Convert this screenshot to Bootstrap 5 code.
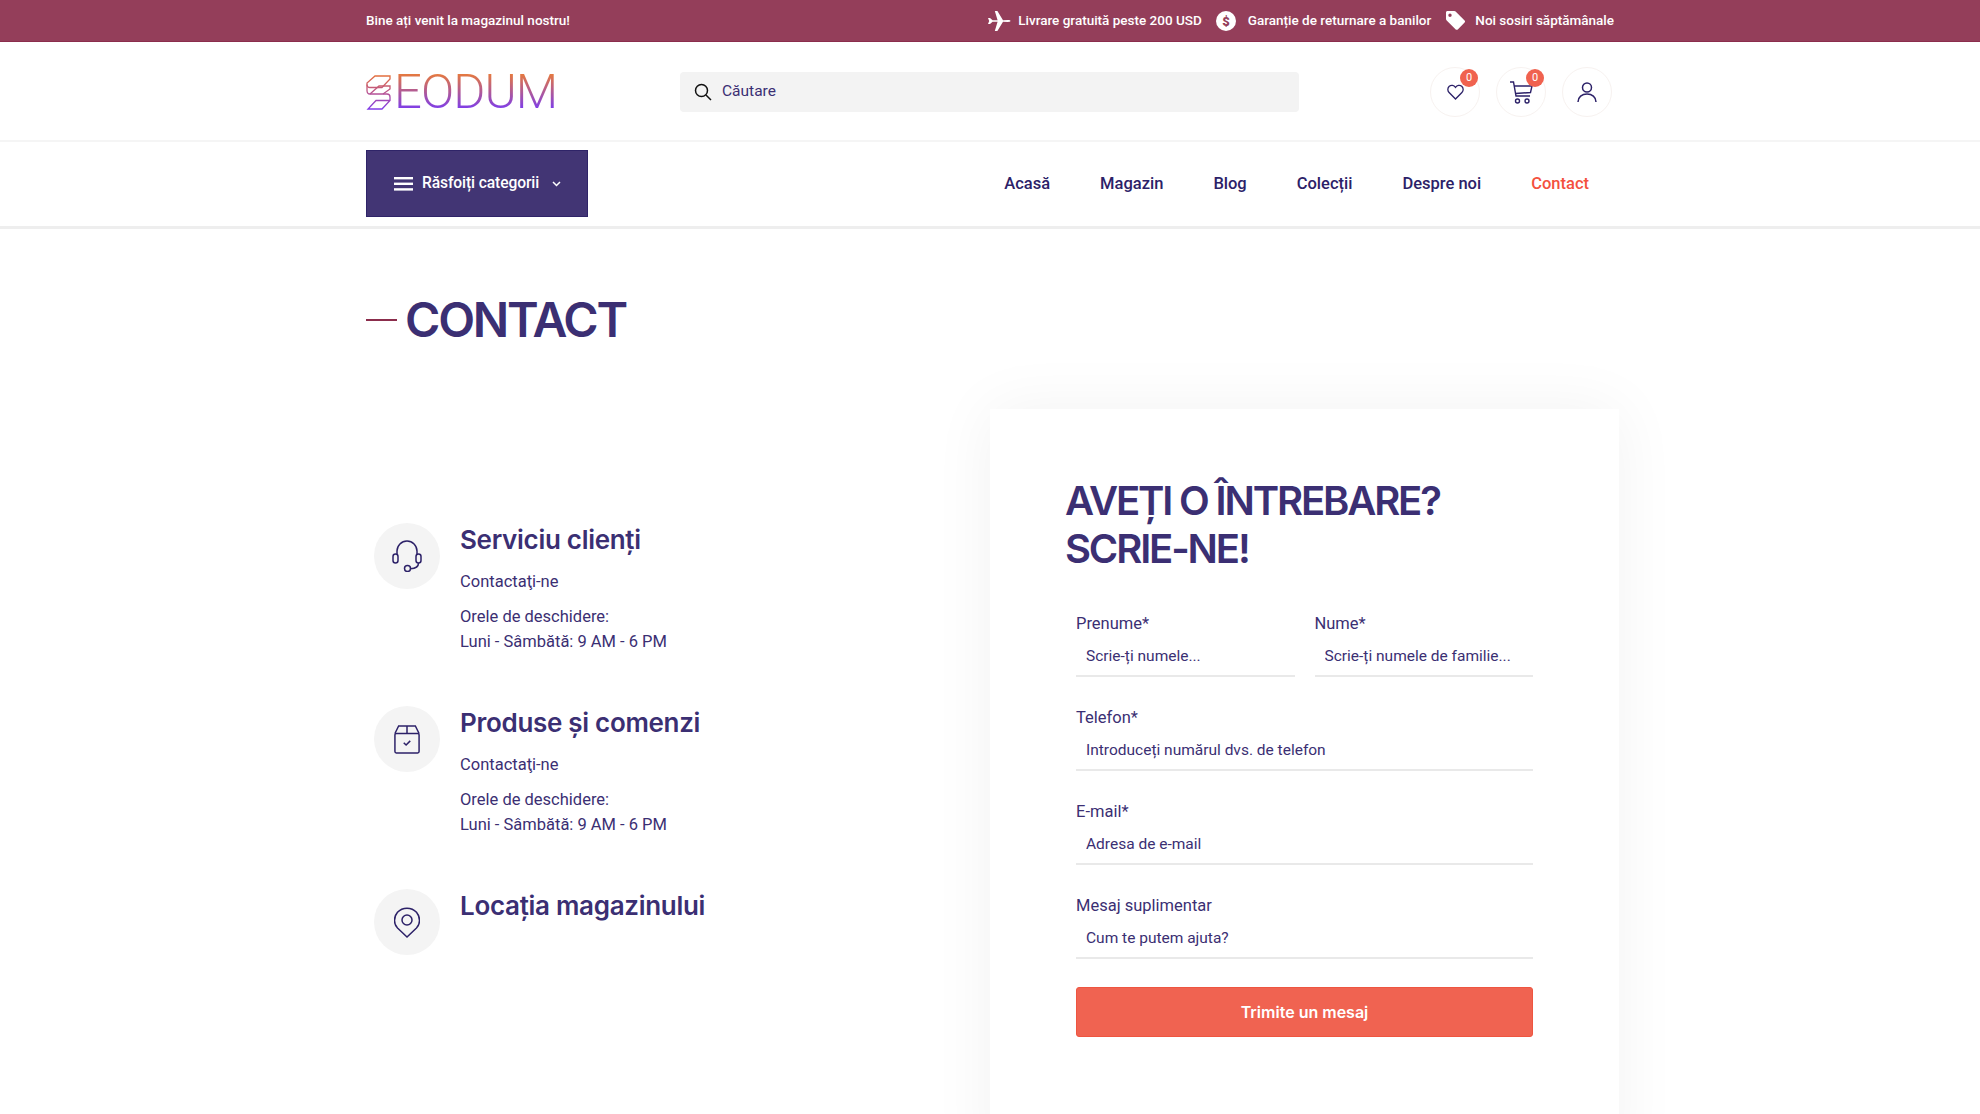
<!DOCTYPE html>
<html lang="ro">
<head>
  <meta charset="UTF-8">
  <meta name="viewport" content="width=device-width, initial-scale=1.0">
  <title>Contact</title>
  <link rel="stylesheet" href="https://cdn.jsdelivr.net/npm/bootstrap@5.3.3/dist/css/bootstrap.min.css">
  <style>
    html, body { height: 1114px; overflow: hidden; }
    body { font-family: Roboto, "Liberation Sans", sans-serif; color: #3b2f73; background: #fff; }
    .wrap { width: 1248px; margin: 0 auto; }
    .topbar { height: 42px; background: #943e5a; border-bottom: 1px solid #8b2d4c; color: #fff; font-size: 13.5px; font-weight: 500; }
    .topbar svg { display: block; flex: none; }
    .gap-plane { margin-right: 7px; }
    .gap-ship { margin-right: 14px; }
    .gap-dollar { margin-right: 12px; }
    .gap-money { margin-right: 14px; }
    .gap-tag { margin-right: 9px; }
    .headbar { height: 100px; border-bottom: 2px solid #f5f5f5; padding-top: 2px; }
    .logo-box { width: 314px; gap: 3px; }
    .logo-word { font-family: Roboto, sans-serif; font-size: 49px; line-height: 36px; font-weight: 300; letter-spacing: -.9px; background: linear-gradient(#e5793f, #7a3bf0); -webkit-background-clip: text; background-clip: text; color: transparent; }
    .search-box { width: 619px; height: 40px; background: #f3f3f3; border-radius: 4px; padding-left: 14px; font-size: 15.5px; color: #3b2f73; gap: 10px; }
    .btn-group-round { gap: 16px; margin-right: 2px; }
    .round-btn { width: 50px; height: 50px; border: 1px solid #f7f2f0; border-radius: 50%; position: relative; }
    .count-dot { position: absolute; top: 1px; right: 1px; width: 18px; height: 18px; border-radius: 50%; background: #f0624f; color: #fff; font-size: 11px; line-height: 18px; text-align: center; }
    .menubar { height: 87px; border-bottom: 3px solid #eeeeee; }
    .cat-btn { width: 222px; height: 67px; background: #423574; border: 1px solid #2f2468; border-radius: 0; color: #fff; font-size: 15.6px; font-weight: 500; padding: 0 0 0 27px; gap: 9px; letter-spacing: -.1px; }
    .cat-btn:hover { background: #423574; color: #fff; }
    .main-menu { height: 69px; }
    .main-menu .nav-link { color: #2c2168; font-size: 16.5px; font-weight: 500; padding: 0 25px; }
    .main-menu .nav-link.active { color: #f4513e; }
    .page-title { font-family: Inter, sans-serif; font-weight: 600; font-size: 48px; line-height: 58px; letter-spacing: -2.2px; color: #3b2f73; margin: 0; }
    .title-dash { width: 31px; height: 2px; background: #8b2d4c; margin-right: 8px; }
    .title-row { padding-top: 62px; }
    .content-row { margin-top: 60px; }
    .info-col { width: 624px; padding: 114px 0 0 8px; flex: none; }
    .info-item { height: 183px; gap: 20px; }
    .ico-circle { width: 66px; height: 66px; border-radius: 50%; background: #f4f4f4; flex: none; }
    .info-item h3 { font-family: Inter, sans-serif; font-weight: 600; font-size: 26px; line-height: 32px; letter-spacing: -.3px; color: #3b2f73; margin: 1px 0 13px; }
    .info-item p { font-size: 16.5px; line-height: 25px; margin: 0 0 10px; color: #3b2f73; }
    .form-card { width: 629px; height: 760px; flex: none; background: #fff; box-shadow: 0 0 60px rgba(0,0,0,.055); padding: 68px 86px 0 86px; }
    .form-card h2 { font-family: Inter, sans-serif; font-weight: 600; font-size: 40px; line-height: 48px; letter-spacing: -2.15px; color: #3b2f73; margin: 0 0 39px -11px; }
    .name-row { gap: 20px; }
    .fld { margin-bottom: 29px; }
    .fld .form-label { font-size: 16.5px; line-height: 24px; margin: 0; color: #3b2f73; display: block; }
    .fld .form-control { border: 0; border-bottom: 2px solid #e9e9e9; border-radius: 0; height: 41px; padding: 0 10px; font-size: 15.5px; font-family: Roboto, sans-serif; color: #3b2f73; box-shadow: none; }
    .fld .form-control::placeholder { color: #3b2f73; opacity: 1; }
    .send-btn { height: 50px; background: #f06351; border: 1px solid #ee5540; border-radius: 3px; color: #fff; font-family: Inter, sans-serif; font-weight: 600; font-size: 16px; letter-spacing: 0; margin-top: -1px; }
    .send-btn:hover { background: #f06351; color: #fff; }
  </style>
</head>
<body>
  <div class="topbar">
    <div class="wrap h-100 d-flex align-items-center justify-content-between">
      <span>Bine ați venit la magazinul nostru!</span>
      <div class="d-flex align-items-center">
        <svg width="24" height="22" viewBox="0 0 24 22" fill="#fff" class="gap-plane"><path d="M1 8l2 0 2.600 2.300 5-.1L7.800 1h2.600l5.600 9.200 5-.1c1.500 0 2.500.4 2.500.9s-1 .9-2.500.9l-5 -.1L10.400 21H7.800l2.800-9.200-5-.1L3 14H1l1.200-3z"/></svg>
        <span class="gap-ship">Livrare gratuită peste 200 USD</span>
        <svg width="20" height="20" viewBox="0 0 20 20" class="gap-dollar"><circle cx="10" cy="10" r="10" fill="#fff"/><text x="10" y="14.500" text-anchor="middle" font-size="13" font-weight="900" font-family="Roboto" fill="#943e5a">$</text></svg>
        <span class="gap-money">Garanție de returnare a banilor</span>
        <svg width="21" height="21" viewBox="0 0 21 21" class="gap-tag"><path fill="#fff" d="M1 2.500C1 1.600 1.600 1 2.500 1h6.800c.5 0 1 .2 1.300.5l9 9c.6.600.6 1.500 0 2.100l-6.800 6.800c-.6.600-1.500.6-2.100 0l-9-9c-.4-.3-.7-.8-.7-1.300zM5 3.500a1.700 1.700 0 1 0 0 3.400 1.700 1.700 0 0 0 0-3.400z"/></svg>
        <span>Noi sosiri săptămânale</span>
      </div>
    </div>
  </div>

  <div class="headbar">
    <div class="wrap h-100 d-flex align-items-center">
      <div class="logo-box d-flex align-items-center">
        <svg width="25" height="35" viewBox="0 0 25 35" fill="none" stroke="url(#lg)" stroke-width="1.300">
          <defs><linearGradient id="lg" gradientUnits="userSpaceOnUse" x1="0" y1="0" x2="0" y2="35"><stop offset="0" stop-color="#e4703a"/><stop offset=".5" stop-color="#b9528f"/><stop offset="1" stop-color="#7c3aed"/></linearGradient></defs>
          <path d="M9 1h15v3l-8 8.500H4C2 12.500 1 11.500 1 9.500V8z"/>
          <path d="M1 9.500v6c0 2 1 3.500 3 3.500h17c2 0 3 1 3 3v3.500L16 34H2l8-8.500h14"/>
          <path d="M4 19l9-8h11v3l-7 5"/>
        </svg>
        <span class="logo-word">EODUM</span>
      </div>
      <div class="search-box d-flex align-items-center">
        <svg width="18" height="18" viewBox="0 0 18 18" fill="none" stroke="#111" stroke-width="1.500"><circle cx="7.500" cy="7.500" r="6"/><path d="M12 12l5 5"/></svg>
        <span>Căutare</span>
      </div>
      <div class="ms-auto d-flex btn-group-round">
        <div class="round-btn d-flex align-items-center justify-content-center">
          <svg width="17" height="16" viewBox="0 0 18 17" fill="none" stroke="#2c2168" stroke-width="1.400"><path d="M9 16L2.200 9C.3 7 .5 4 2.400 2.300 4.400.7 7.300 1.200 9 3.600 10.700 1.200 13.600.7 15.600 2.300 17.500 4 17.700 7 15.800 9z"/></svg>
          <span class="count-dot">0</span>
        </div>
        <div class="round-btn d-flex align-items-center justify-content-center">
          <svg width="24" height="23" viewBox="0 0 24 23" fill="none" stroke="#2c2168" stroke-width="1.400"><path d="M1 1h3.500l2.500 14h14M5.500 5H23l-1.500 6.500L6.500 12.500"/><circle cx="8.500" cy="20" r="2"/><circle cx="18" cy="20" r="2"/></svg>
          <span class="count-dot">0</span>
        </div>
        <div class="round-btn d-flex align-items-center justify-content-center">
          <svg width="20" height="20" viewBox="0 0 20 20" fill="none" stroke="#2c2168" stroke-width="1.500"><circle cx="10" cy="5.500" r="4.500"/><path d="M1 20c0-5 4-8 9-8s9 3 9 8"/></svg>
        </div>
      </div>
    </div>
  </div>

  <div class="menubar">
    <div class="wrap h-100 d-flex align-items-start justify-content-between pt-2">
      <button type="button" class="btn cat-btn d-flex align-items-center">
        <svg width="19" height="14" viewBox="0 0 19 14" fill="#fff"><rect width="19" height="2.400" y="0"/><rect width="19" height="2.400" y="5.600"/><rect width="19" height="2.400" y="11.200"/></svg>
        <span>Răsfoiți categorii</span>
        <svg width="9" height="6" viewBox="0 0 9 6" fill="none" stroke="#fff" stroke-width="1.500" class="ms-1"><path d="M1 1l3.500 3.500L8 1"/></svg>
      </button>
      <ul class="nav main-menu align-items-center">
        <li class="nav-item"><a class="nav-link" href="#">Acasă</a></li>
        <li class="nav-item"><a class="nav-link" href="#">Magazin</a></li>
        <li class="nav-item"><a class="nav-link" href="#">Blog</a></li>
        <li class="nav-item"><a class="nav-link" href="#">Colecții</a></li>
        <li class="nav-item"><a class="nav-link" href="#">Despre noi</a></li>
        <li class="nav-item"><a class="nav-link active" href="#">Contact</a></li>
      </ul>
    </div>
  </div>

  <div class="wrap">
    <div class="title-row d-flex align-items-center">
      <span class="title-dash"></span>
      <h1 class="page-title">CONTACT</h1>
    </div>
    <div class="content-row d-flex">
      <div class="info-col">
        <div class="info-item d-flex">
          <div class="ico-circle d-flex align-items-center justify-content-center">
            <svg width="30" height="32" viewBox="0 0 30 32" fill="none" stroke="#2c2168" stroke-width="1.500"><path d="M5 14v-3a10 10 0 0 1 20 0v3"/><rect x="1" y="14" width="5" height="9" rx="2.500"/><rect x="24" y="14" width="5" height="9" rx="2.500"/><path d="M26.500 23c0 3.500-3 5.500-8 5.800"/><circle cx="15.500" cy="28.500" r="3"/></svg>
          </div>
          <div>
            <h3>Serviciu clienți</h3>
            <p>Contactaţi-ne</p>
            <p>Orele de deschidere:<br>Luni - Sâmbătă: 9 AM - 6 PM</p>
          </div>
        </div>
        <div class="info-item d-flex">
          <div class="ico-circle d-flex align-items-center justify-content-center">
            <svg width="26" height="31" viewBox="0 0 28 31" fill="none" stroke="#2c2168" stroke-width="1.600"><rect x="1" y="9" width="26" height="21" rx="1.500"/><path d="M1 9l4-8h18l4 8M14 1v8M10.500 19l2.500 2.500 4.500-4.500"/></svg>
          </div>
          <div>
            <h3>Produse și comenzi</h3>
            <p>Contactaţi-ne</p>
            <p>Orele de deschidere:<br>Luni - Sâmbătă: 9 AM - 6 PM</p>
          </div>
        </div>
        <div class="info-item d-flex">
          <div class="ico-circle d-flex align-items-center justify-content-center">
            <svg width="26" height="31" viewBox="0 0 26 31" fill="none" stroke="#2c2168" stroke-width="1.500"><path d="M13 30L3.500 21C-.5 17-.5 10 3.500 5.200 8.500-.2 17.500-.2 22.500 5.200c4 4.800 4 11.800 0 15.800z"/><circle cx="13" cy="13" r="5"/></svg>
          </div>
          <div>
            <h3>Locația magazinului</h3>
          </div>
        </div>
      </div>
      <div class="form-card">
        <h2>AVEȚI O ÎNTREBARE?<br>SCRIE-NE!</h2>
        <form>
          <div class="d-flex name-row">
            <div class="fld w-50">
              <label class="form-label">Prenume*</label>
              <input type="text" class="form-control" placeholder="Scrie-ți numele...">
            </div>
            <div class="fld w-50">
              <label class="form-label">Nume*</label>
              <input type="text" class="form-control" placeholder="Scrie-ți numele de familie...">
            </div>
          </div>
          <div class="fld">
            <label class="form-label">Telefon*</label>
            <input type="text" class="form-control" placeholder="Introduceți numărul dvs. de telefon">
          </div>
          <div class="fld">
            <label class="form-label">E-mail*</label>
            <input type="text" class="form-control" placeholder="Adresa de e-mail">
          </div>
          <div class="fld">
            <label class="form-label">Mesaj suplimentar</label>
            <input type="text" class="form-control" placeholder="Cum te putem ajuta?">
          </div>
          <button type="button" class="btn send-btn w-100">Trimite un mesaj</button>
        </form>
      </div>
    </div>
  </div>
  <script src="https://cdn.jsdelivr.net/npm/bootstrap@5.3.3/dist/js/bootstrap.bundle.min.js"></script>
</body>
</html>
